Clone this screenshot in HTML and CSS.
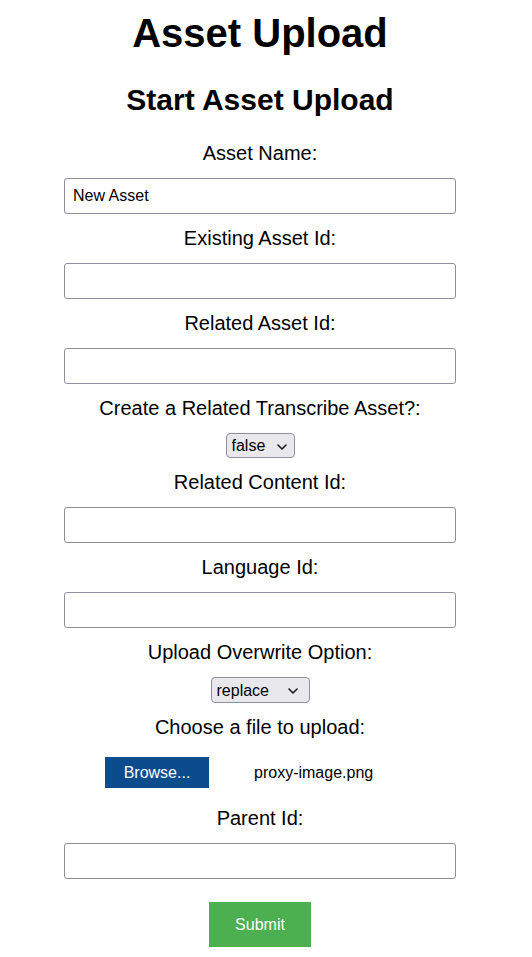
FILE: index.html
```html
<!DOCTYPE html>
<html lang="en">
<head>
<meta charset="utf-8">
<title>Asset Upload</title>
<link rel="stylesheet" href="styles.css">
</head>
<body>
<div class="page">
  <h1 class="title">Asset Upload</h1>
  <h2 class="subtitle">Start Asset Upload</h2>
  <form class="form">
    <label class="field-label" for="assetName">Asset Name:</label>
    <input class="text-input" id="assetName" type="text" value="New Asset">

    <label class="field-label" for="existingId">Existing Asset Id:</label>
    <input class="text-input" id="existingId" type="text">

    <label class="field-label" for="relatedId">Related Asset Id:</label>
    <input class="text-input" id="relatedId" type="text">

    <label class="field-label" for="transcribe">Create a Related Transcribe Asset?:</label>
    <div class="select-wrap select-small">
      <select class="select" id="transcribe">
        <option>false</option>
        <option>true</option>
      </select>
      <svg class="chevron" width="10" height="6" viewBox="0 0 10 6"><polyline points="1,1 5,5 9,1" fill="none" stroke="#1b1b1b" stroke-width="1.6" stroke-linecap="round" stroke-linejoin="round"/></svg>
    </div>

    <label class="field-label" for="contentId">Related Content Id:</label>
    <input class="text-input" id="contentId" type="text">

    <label class="field-label" for="languageId">Language Id:</label>
    <input class="text-input" id="languageId" type="text">

    <label class="field-label" for="overwrite">Upload Overwrite Option:</label>
    <div class="select-wrap select-wide">
      <select class="select" id="overwrite">
        <option>replace</option>
        <option>version</option>
      </select>
      <svg class="chevron" width="10" height="6" viewBox="0 0 10 6"><polyline points="1,1 5,5 9,1" fill="none" stroke="#1b1b1b" stroke-width="1.6" stroke-linecap="round" stroke-linejoin="round"/></svg>
    </div>

    <label class="field-label" for="fileInput">Choose a file to upload:</label>
    <div class="file-row">
      <label class="browse-btn" for="fileInput">Browse...</label>
      <input class="file-hidden" id="fileInput" type="file">
      <span class="file-name">proxy-image.png</span>
    </div>

    <label class="field-label" for="parentId">Parent Id:</label>
    <input class="text-input" id="parentId" type="text">

    <button class="submit-btn" type="submit">Submit</button>
  </form>
</div>
</body>
</html>
```
FILE: styles.css
```css
* {
  box-sizing: border-box;
}

body {
  margin: 0;
  background: #ffffff;
  color: #000000;
  font-family: "Liberation Sans", Arial, sans-serif;
}

.page {
  width: 520px;
  padding-top: 10px;
  text-align: center;
}

.title {
  margin: 0 0 27px;
  font-size: 40px;
  line-height: 46px;
  font-weight: bold;
}

.subtitle {
  margin: 0 0 25px;
  font-size: 30px;
  line-height: 34px;
  font-weight: bold;
}

.form {
  display: block;
  margin: 0;
}

.field-label {
  display: block;
  margin: 13px 0;
  font-size: 20px;
  line-height: 23px;
}

.text-input {
  display: block;
  width: 392px;
  height: 36px;
  margin: 0 auto;
  padding: 0 8px;
  border: 1px solid #8f8f9d;
  border-radius: 3px;
  background: #ffffff;
  font-family: "Liberation Sans", Arial, sans-serif;
  font-size: 16px;
  color: #000000;
}

.select-wrap {
  position: relative;
  margin: 0 auto;
  height: 25px;
}

.select-small {
  width: 69px;
}

.select-wide {
  width: 99px;
  height: 26px;
}

.select {
  appearance: none;
  -webkit-appearance: none;
  display: block;
  width: 100%;
  height: 100%;
  margin: 0;
  padding: 0 0 0 5px;
  border: 1px solid #8f8f9d;
  border-radius: 4px;
  background: #e9e9ed;
  font-family: "Liberation Sans", Arial, sans-serif;
  font-size: 16px;
  color: #000000;
  text-align: left;
}

.chevron {
  position: absolute;
  right: 8px;
  top: 50%;
  margin-top: -2px;
  pointer-events: none;
}

.select-wide .chevron {
  right: 12px;
}

.file-row {
  display: flex;
  align-items: center;
  width: 310px;
  margin: 0 auto;
  padding: 5px 0 6px;
}

.browse-btn {
  display: flex;
  align-items: center;
  justify-content: center;
  width: 104px;
  height: 31px;
  background: #0b4d8c;
  color: #ffffff;
  font-size: 16px;
  cursor: pointer;
}

.file-hidden {
  display: none;
}

.file-name {
  margin-left: 45px;
  font-size: 16px;
}

.submit-btn {
  display: block;
  width: 102px;
  height: 45px;
  margin: 23px auto 0;
  padding: 0;
  border: none;
  background: #4caf50;
  color: #ffffff;
  font-family: "Liberation Sans", Arial, sans-serif;
  font-size: 16px;
  cursor: pointer;
}
```
